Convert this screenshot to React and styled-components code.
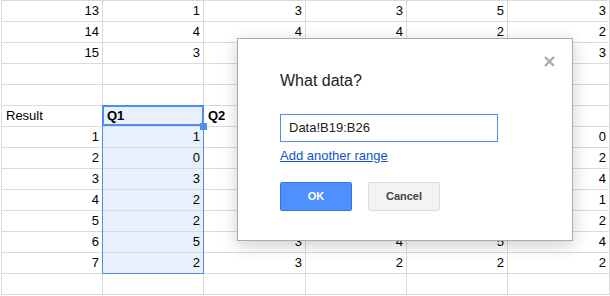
import styled, { createGlobalStyle } from 'styled-components';

const GlobalStyle = createGlobalStyle`
  html, body {
    margin: 0;
    padding: 0;
    background: #fff;
    font-family: "Liberation Sans", Arial, sans-serif;
    overflow: hidden;
  }
`;

const Page = styled.div`
  position: relative;
  width: 610px;
  height: 296px;
  overflow: hidden;
`;

const Sheet = styled.div`
  position: relative;
  margin-left: 1px;
  display: grid;
  grid-template-columns: 101px 101px 102px 101px 101px 102px;
  grid-auto-rows: 21px;
  border-top: 1px solid #dadada;
  border-left: 1px solid #dadada;
`;

const Cell = styled.div`
  box-sizing: border-box;
  border-right: 1px solid #dadada;
  border-bottom: 1px solid #dadada;
  padding: 0 3px 0 4px;
  font-size: 13px;
  line-height: 20px;
  color: #000;
  white-space: nowrap;
  overflow: hidden;
  text-align: ${(p) => (p.$left ? 'left' : 'right')};
  font-weight: ${(p) => (p.$bold ? 'bold' : 'normal')};
  background: ${(p) => (p.$selected ? '#e9f0fd' : '#fff')};
`;

// selection outline sits over the cells
const HeaderBox = styled.div`
  position: absolute;
  left: 100px;
  top: 104px;
  width: 102px;
  height: 21px;
  box-sizing: border-box;
  border: 2px solid #4d8cf2;
  pointer-events: none;
`;

const RangeBox = styled.div`
  position: absolute;
  left: 100px;
  top: 125px;
  width: 102px;
  height: 148px;
  box-sizing: border-box;
  border: 1px solid #4d8cf2;
  border-top: none;
  pointer-events: none;
`;

const FillHandle = styled.div`
  position: absolute;
  left: 198px;
  top: 122px;
  width: 7px;
  height: 7px;
  background: #4d8cf2;
`;

const Dialog = styled.div`
  position: absolute;
  left: 237px;
  top: 38px;
  width: 336px;
  box-sizing: border-box;
  padding: 30px 42px 29px;
  display: flex;
  flex-direction: column;
  align-items: flex-start;
  background: #fff;
  border: 1px solid rgba(0, 0, 0, 0.33);
  box-shadow: 0 4px 16px rgba(0, 0, 0, 0.2);
`;

const Close = styled.button`
  position: absolute;
  right: 17px;
  top: 17px;
  width: 11px;
  height: 11px;
  padding: 0;
  border: none;
  background: none;
  display: flex;
`;

const Title = styled.div`
  font-size: 16px;
  line-height: 24px;
  color: #222;
`;

const RangeInput = styled.div`
  margin-top: 21px;
  width: 218px;
  height: 28px;
  box-sizing: border-box;
  border: 1px solid #4d90fe;
  padding-left: 8px;
  font-size: 13px;
  line-height: 26px;
  color: #222;
`;

const Link = styled.a`
  margin-top: 6px;
  font-size: 13px;
  line-height: 16px;
  color: #15c;
  text-decoration: underline;
`;

const Buttons = styled.div`
  display: flex;
  gap: 16px;
  margin-top: 18px;
`;

const Button = styled.div`
  min-width: 72px;
  height: 29px;
  box-sizing: border-box;
  border-radius: 2px;
  font-size: 11px;
  font-weight: bold;
  line-height: 27px;
  text-align: center;
  border: 1px solid ${(p) => (p.$primary ? '#3079ed' : '#dcdcdc')};
  background: ${(p) => (p.$primary ? '#4d90fe' : '#f3f3f3')};
  color: ${(p) => (p.$primary ? '#fff' : '#444')};
`;

// cells hidden under the dialog are left blank
const rows = [
  ['13', '1', '3', '3', '5', '3'],
  ['14', '4', '4', '4', '2', '2'],
  ['15', '3', '', '', '', '3'],
  ['', '', '', '', '', ''],
  ['', '', '', '', '', ''],
  ['Result', 'Q1', 'Q2', '', '', ''],
  ['1', '1', '', '', '', '0'],
  ['2', '0', '', '', '', '2'],
  ['3', '3', '', '', '', '4'],
  ['4', '2', '', '', '', '1'],
  ['5', '2', '', '', '', '2'],
  ['6', '5', '3', '4', '5', '4'],
  ['7', '2', '3', '2', '2', '2'],
  ['', '', '', '', '', ''],
];

export default function App() {
  return (
    <Page>
      <GlobalStyle />
      <Sheet>
        {rows.map((row, r) =>
          row.map((v, c) => (
            <Cell
              key={`${r}-${c}`}
              $left={r === 5}
              $bold={r === 5 && c > 0}
              $selected={c === 1 && r >= 5 && r <= 12}
            >
              {v}
            </Cell>
          ))
        )}
        <HeaderBox />
        <RangeBox />
        <FillHandle />
      </Sheet>
      <Dialog>
        <Close aria-label="Close">
          <svg width="11" height="11" viewBox="0 0 11 11">
            <path d="M1 1L10 10M10 1L1 10" stroke="#a8a8a8" strokeWidth="2.2" />
          </svg>
        </Close>
        <Title>What data?</Title>
        <RangeInput>Data!B19:B26</RangeInput>
        <Link href="#">Add another range</Link>
        <Buttons>
          <Button $primary>OK</Button>
          <Button>Cancel</Button>
        </Buttons>
      </Dialog>
    </Page>
  );
}
